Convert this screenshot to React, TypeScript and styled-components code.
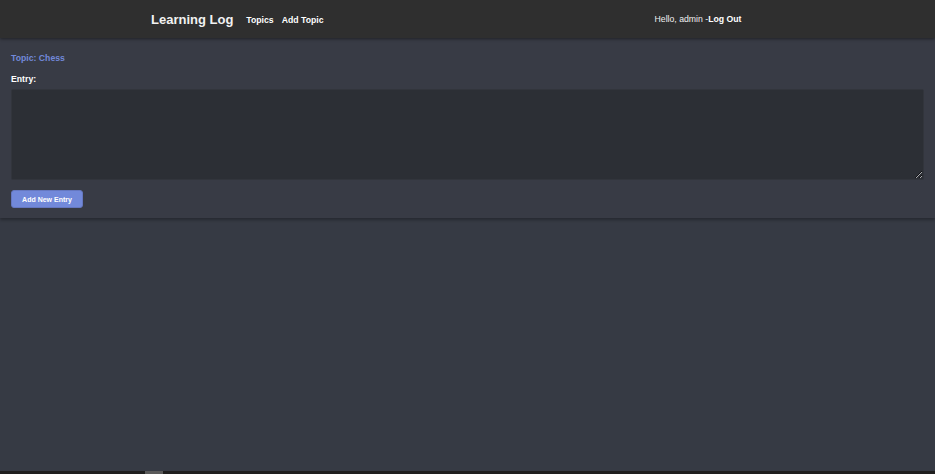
import React from "react";
import styled, { createGlobalStyle } from "styled-components";

const Global = createGlobalStyle`
  html, body { margin: 0; padding: 0; }
  body {
    background: #363a44;
    font-family: "Liberation Sans", Arial, sans-serif;
    color: #ffffff;
  }
  * { box-sizing: border-box; }
`;

const Page = styled.div`
  height: 474px;
  display: flex;
  flex-direction: column;
  background: #363a44;
`;

const Header = styled.header`
  height: 38px;
  background: #2f2f2f;
  display: flex;
  align-items: center;
  padding: 0 0 0 151px;
  box-shadow: 0 1px 3px rgba(0, 0, 0, 0.45);
  position: relative;
  z-index: 2;
  flex-shrink: 0;
`;

const Brand = styled.a`
  font-size: 13px;
  font-weight: bold;
  color: #f2f2f2;
  text-decoration: none;
  margin-right: 13px;
`;

const NavLink = styled.a<{ $flush?: boolean }>`
  font-size: 8.7px;
  font-weight: bold;
  color: #ffffff;
  text-decoration: none;
  margin-right: ${(p) => (p.$flush ? "0" : "8px")};
  margin-top: ${(p) => (p.$flush ? "0" : "2px")};
`;

const NavRight = styled.div`
  margin-left: 323px;
  font-size: 8.7px;
  color: #f0f0f0;
  display: flex;
  align-items: center;
  margin-top: -1px;
`;

const Card = styled.main`
  background: #383b45;
  padding: 14px 11px 10px 11px;
  box-shadow: 0 2px 3px rgba(0, 0, 0, 0.3);
  position: relative;
  z-index: 1;
`;

const TopicTitle = styled.h2`
  margin: 0;
  font-size: 8.7px;
  font-weight: bold;
  color: #7289da;
  line-height: 12px;
`;

const Label = styled.label`
  display: block;
  margin-top: 9px;
  font-size: 8.7px;
  font-weight: bold;
  color: #ffffff;
  line-height: 12px;
`;

const TextArea = styled.textarea`
  display: block;
  width: 913px;
  height: 91px;
  margin-top: 4px;
  background: #2c2f35;
  border: 1px solid #32353c;
  border-radius: 2px;
  color: #fff;
  resize: vertical;
  outline: none;
`;

const Button = styled.button`
  margin-top: 10px;
  width: 72px;
  height: 18px;
  background: #7289da;
  border: 1px solid #6577c0;
  border-radius: 3px;
  color: #ffffff;
  font-family: "Liberation Sans", Arial, sans-serif;
  font-size: 7px;
  font-weight: bold;
  padding: 0;
  cursor: pointer;
`;

const Spacer = styled.div`
  flex: 1;
`;

const ScrollTrack = styled.div`
  height: 3px;
  background: #1f1f1f;
  display: flex;
  padding-left: 145px;
`;

const ScrollThumb = styled.div`
  width: 18px;
  height: 3px;
  background: #5a5a5a;
`;

export default function App() {
  return (
    <>
      <Global />
      <Page>
        <Header>
          <Brand href="#">Learning Log</Brand>
          <NavLink href="#">Topics</NavLink>
          <NavLink href="#">Add Topic</NavLink>
          <NavRight>
            Hello, admin -<NavLink href="#" $flush>Log Out</NavLink>
          </NavRight>
        </Header>
        <Card>
          <TopicTitle>Topic: Chess</TopicTitle>
          <Label htmlFor="entry">Entry:</Label>
          <TextArea id="entry" />
          <Button>Add New Entry</Button>
        </Card>
        <Spacer />
        <ScrollTrack>
          <ScrollThumb />
        </ScrollTrack>
      </Page>
    </>
  );
}
